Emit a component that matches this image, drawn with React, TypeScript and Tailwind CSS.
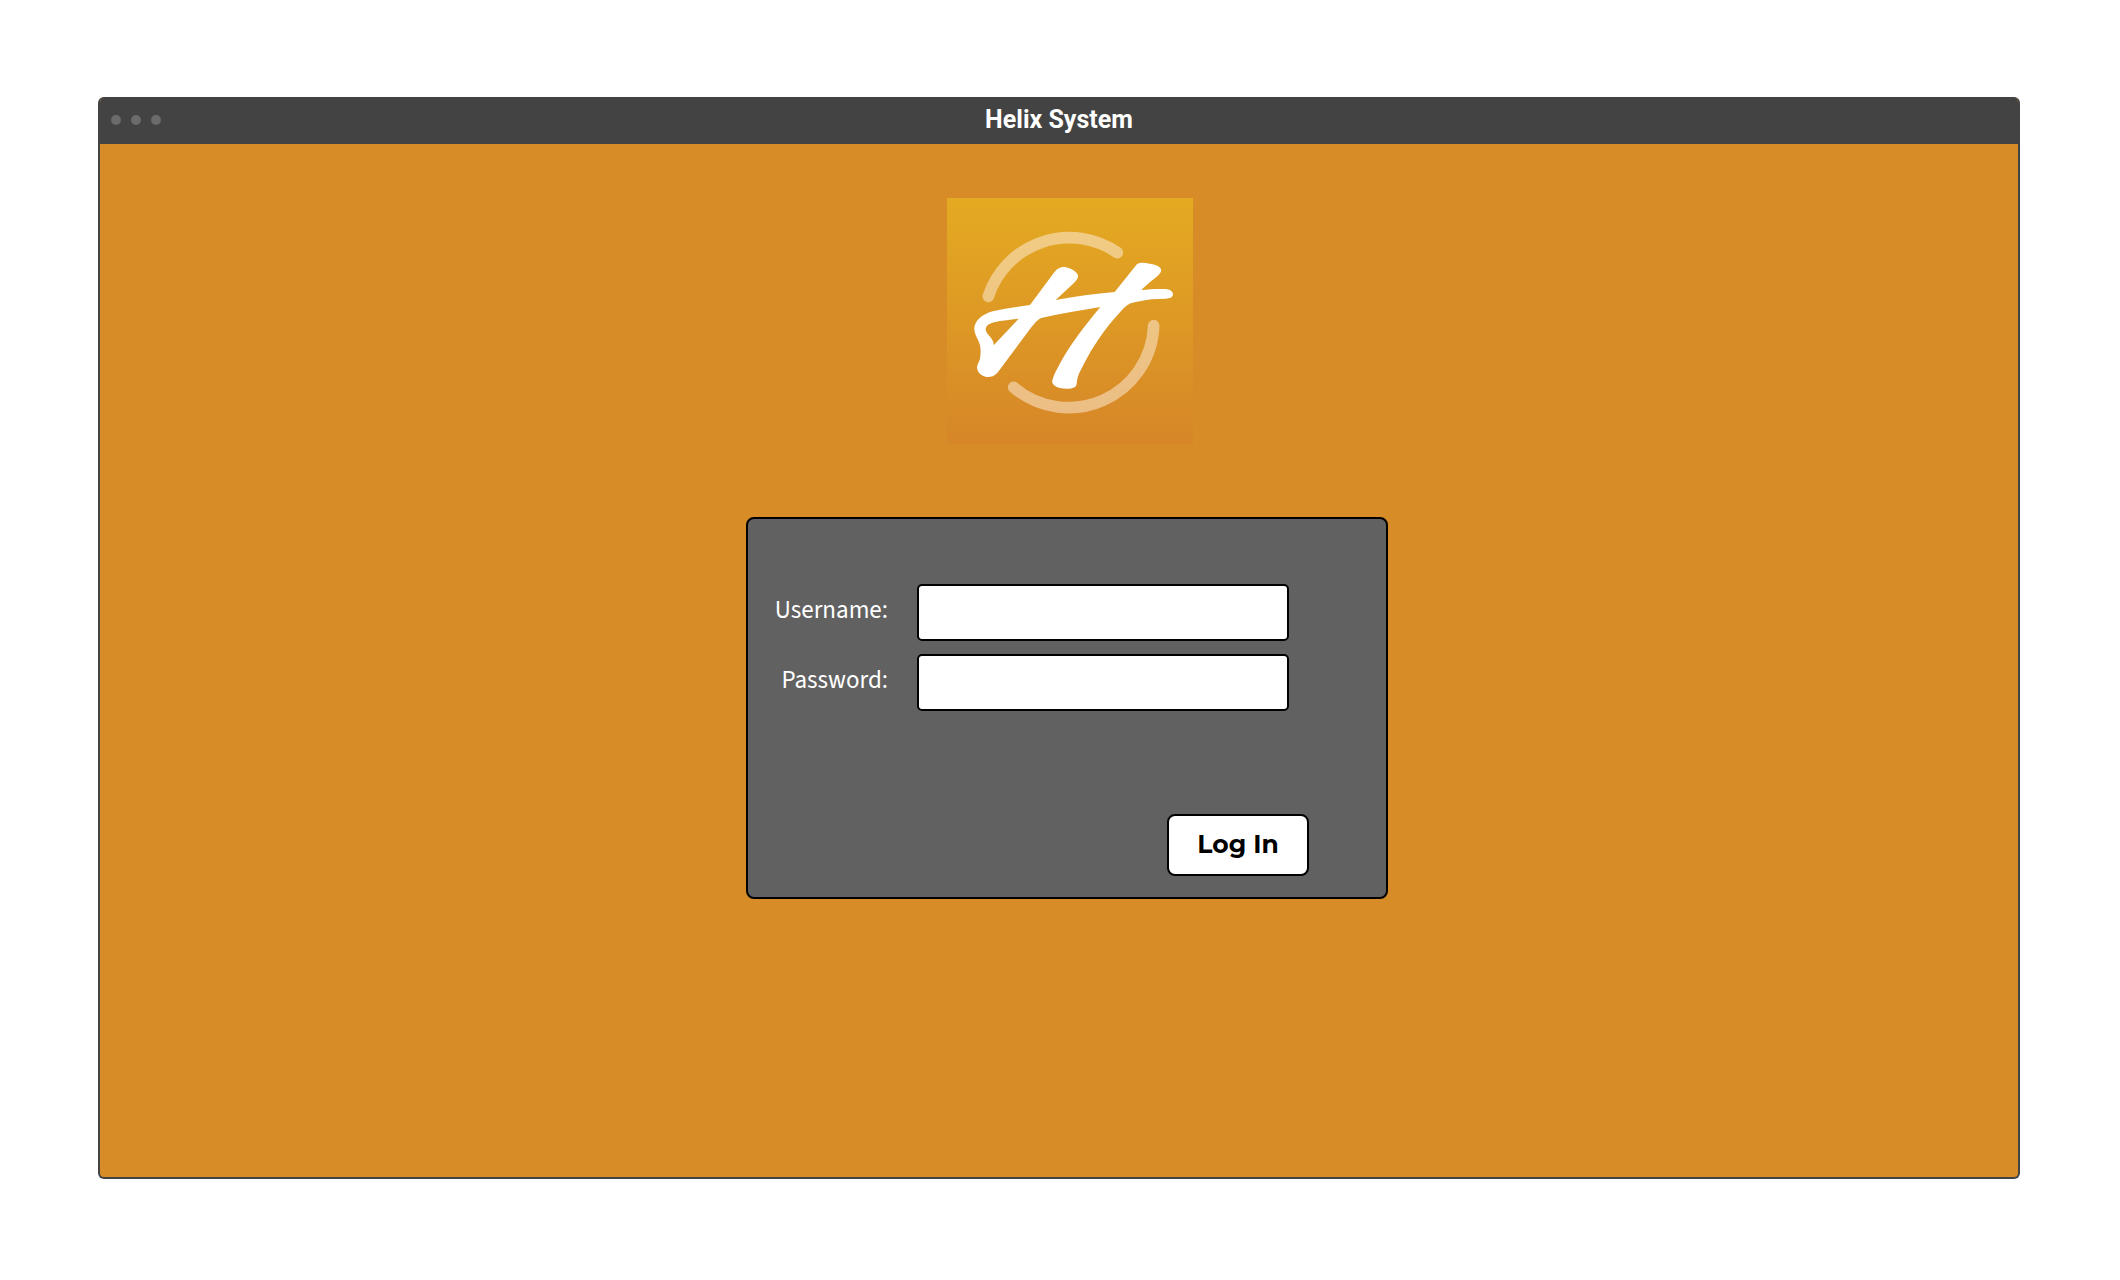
import { useState } from 'react';
import type { FormEvent } from 'react';

function HelixLogo() {
  return (
    <svg className="block size-[246px]" viewBox="21 24 738 738" role="img" aria-label="Helix logo">
      <defs>
        <linearGradient id="helix-bg" x1="0" y1="0" x2="0" y2="1">
          <stop offset="0" stopColor="#e4aa22" />
          <stop offset="0.1" stopColor="#e3a722" />
          <stop offset="1" stopColor="#d68628" />
        </linearGradient>
      </defs>
      <rect x="21" y="24" width="738" height="738" fill="url(#helix-bg)" />
      <g fill="none" stroke="#fff1e4" strokeOpacity="0.5" strokeWidth="35" strokeLinecap="round">
        <path d="M145 319A255 255 0 0 1 532 188" />
        <path d="M641 407A255 255 0 0 1 221 592" />
      </g>
      <path
        fill="#fff"
        fillRule="evenodd"
        d="M270 345L339 252C350 237 359 231 370 231C384 231 400 239 409 248C415 254 416 261 411 268C406 276 397 284 388 292L347 330C405 320 465 311 524 306L587 227C592 220 597 218 605 218C622 219 638 221 652 227C663 232 667 240 660 250C653 259 642 267 633 274C622 283 613 292 604 300C629 297 654 296 676 297C690 298 699 304 699 313C698 323 690 326 676 326L634 328C614 330 592 335 572 340C558 346 548 358 536 371C494 417 458 469 430 525C420 544 413 557 411 572C410 580 410 586 406 590C400 596 378 598 360 594C345 590 334 581 337 571C341 554 351 537 361 518C395 458 436 405 481 351C423 361 363 370 304 384C290 390 281 404 270 417L178 541C167 556 158 561 146 561C127 561 112 548 111 533C111 522 118 515 120 506C122 492 123 479 120 466C116 450 104 435 103 418C102 394 125 373 158 364C194 355 232 351 270 345ZM236 386L161 466C162 453 154 444 145 434C138 426 134 417 140 409C149 397 168 395 187 392Z"
      />
    </svg>
  );
}

const labelClass = 'pb-1 text-right';
const fieldClass =
  'h-[57px] w-full rounded-[5px] border-2 border-black bg-white px-3 text-black outline-none';

export default function App() {
  const [username, setUsername] = useState('');
  const [password, setPassword] = useState('');
  const onSubmit = (event: FormEvent) => event.preventDefault();

  return (
    <div className="flex min-h-screen flex-col bg-white pt-[97px] pr-[100px] pb-[101px] pl-[98px]">
      <div className="flex flex-1 flex-col overflow-hidden rounded-md border-2 border-t-0 border-[#434343] bg-[#d78c27]">
        <header className="grid h-[47px] shrink-0 grid-cols-[1fr_auto_1fr] items-center bg-[#434343] pb-px">
          <div className="flex gap-2.5 pl-[11px]" aria-hidden="true">
            <span className="size-2.5 rounded-full bg-[#6b6b6b]" />
            <span className="size-2.5 rounded-full bg-[#6b6b6b]" />
            <span className="size-2.5 rounded-full bg-[#6b6b6b]" />
          </div>
          <h1 className="font-['Roboto',sans-serif] text-[25px] font-bold text-white">Helix System</h1>
        </header>

        <main className="flex flex-1 flex-col items-center pt-[54px] pl-4">
          <div className="pl-1.5">
            <HelixLogo />
          </div>

          <form
            onSubmit={onSubmit}
            className="mt-[73px] flex w-full max-w-[642px] flex-col rounded-lg border-2 border-black bg-[#616161] pt-[65px] pb-[21px]"
          >
            <div className="grid grid-cols-[140px_1fr] items-center gap-x-[29px] gap-y-[13px] pr-[97px] font-['Source_Sans_3','Noto_Sans_CJK_SC',sans-serif] text-[25px] text-white">
              <label htmlFor="username" className={labelClass}>
                Username:
              </label>
              <input
                id="username"
                type="text"
                autoComplete="username"
                value={username}
                onChange={(e) => setUsername(e.target.value)}
                className={fieldClass}
              />
              <label htmlFor="password" className={labelClass}>
                Password:
              </label>
              <input
                id="password"
                type="password"
                autoComplete="current-password"
                value={password}
                onChange={(e) => setPassword(e.target.value)}
                className={fieldClass}
              />
            </div>
            <button
              type="submit"
              className="mt-[103px] mr-[77px] h-[62px] w-[142px] self-end rounded-lg border-2 border-black bg-white font-['Montserrat','Inter',sans-serif] text-[25px] font-bold text-black"
            >
              Log In
            </button>
          </form>
        </main>
      </div>
    </div>
  );
}
